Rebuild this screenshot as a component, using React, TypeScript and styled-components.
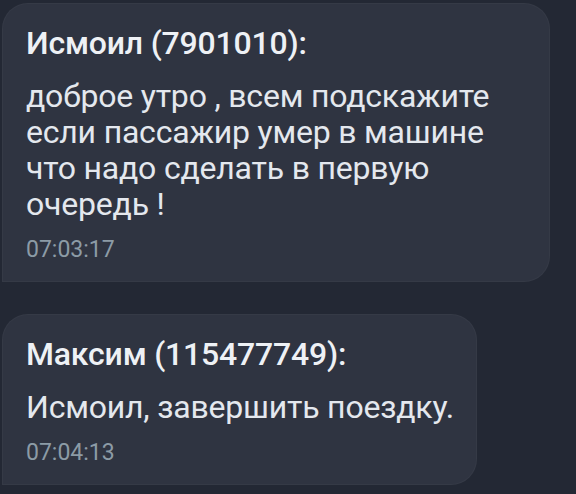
import React from "react";
import styled, { createGlobalStyle } from "styled-components";

const GlobalStyle = createGlobalStyle`
  html, body {
    margin: 0;
    padding: 0;
    background: #232834;
  }
  body {
    font-family: Roboto, "Noto Sans", "Liberation Sans", sans-serif;
    -webkit-font-smoothing: antialiased;
  }
`;

const Feed = styled.div`
  display: flex;
  flex-direction: column;
  align-items: flex-start;
  gap: 32px;
  padding: 3px 0 0 2px;
  width: 576px;
  height: 494px;
  box-sizing: border-box;
  overflow: hidden;
`;

const Bubble = styled.div<{ $maxWidth: number }>`
  box-sizing: border-box;
  max-width: ${(p) => p.$maxWidth}px;
  padding: 21px 22px 19px 23px;
  background: #2f3441;
  border: 1px solid rgba(255, 255, 255, 0.03);
  border-radius: 26px 26px 26px 0;
  display: flex;
  flex-direction: column;
`;

const Author = styled.div`
  color: #eef1f5;
  font-size: 32px;
  font-weight: 500;
  line-height: 36px;
  letter-spacing: -0.2px;
`;

const Text = styled.div`
  margin-top: 17px;
  color: #e4e8ee;
  font-size: 32px;
  font-weight: 400;
  line-height: 36px;
  letter-spacing: -0.2px;
`;

const Time = styled.div`
  margin-top: 16px;
  color: #8c9ba6;
  font-size: 23px;
  line-height: 24px;
`;

type Message = { author: string; text: string; time: string; maxWidth: number };

const messages: Message[] = [
  {
    author: "Исмоил (7901010):",
    text: "доброе утро , всем подскажите если пассажир умер в машине что надо сделать в первую очередь !",
    time: "07:03:17",
    maxWidth: 548,
  },
  {
    author: "Максим (115477749):",
    text: "Исмоил, завершить поездку.",
    time: "07:04:13",
    maxWidth: 548,
  },
];

export default function App() {
  return (
    <>
      <GlobalStyle />
      <Feed>
        {messages.map((m) => (
          <Bubble key={m.time} $maxWidth={m.maxWidth}>
            <Author>{m.author}</Author>
            <Text>{m.text}</Text>
            <Time>{m.time}</Time>
          </Bubble>
        ))}
      </Feed>
    </>
  );
}
